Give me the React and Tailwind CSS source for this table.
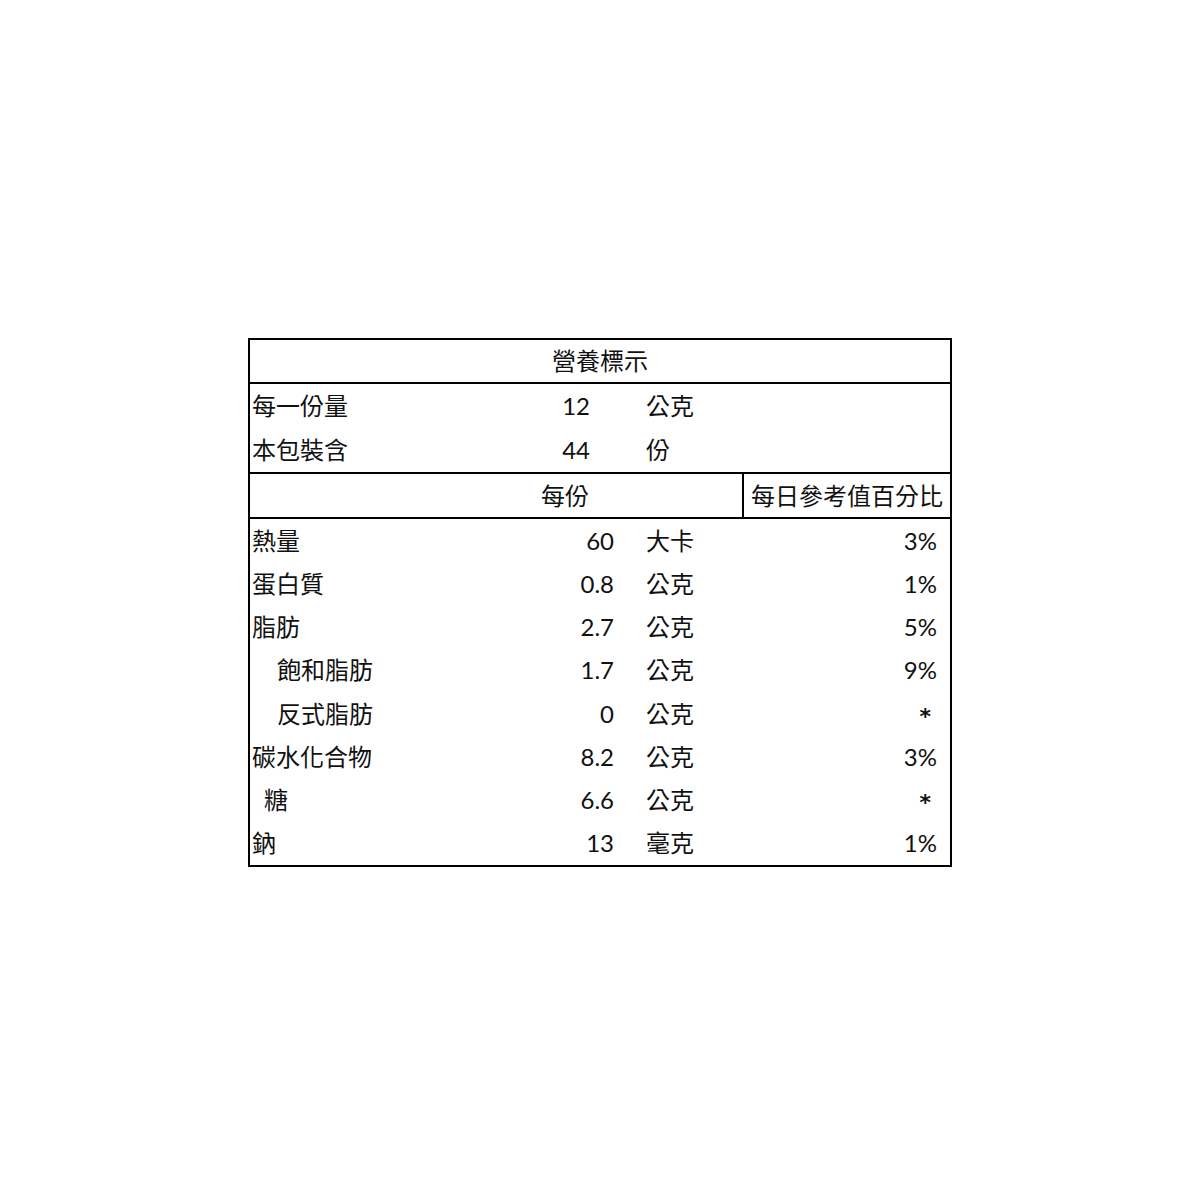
const serving = [
  { label: "每一份量", value: "12", unit: "公克" },
  { label: "本包裝含", value: "44", unit: "份" },
];

const rows = [
  { label: "熱量", indent: "", value: "60", unit: "大卡", pct: "3%" },
  { label: "蛋白質", indent: "", value: "0.8", unit: "公克", pct: "1%" },
  { label: "脂肪", indent: "", value: "2.7", unit: "公克", pct: "5%" },
  { label: "飽和脂肪", indent: "pl-[27px]", value: "1.7", unit: "公克", pct: "9%" },
  { label: "反式脂肪", indent: "pl-[27px]", value: "0", unit: "公克", pct: "*" },
  { label: "碳水化合物", indent: "", value: "8.2", unit: "公克", pct: "3%" },
  { label: "糖", indent: "pl-[14px]", value: "6.6", unit: "公克", pct: "*" },
  { label: "鈉", indent: "", value: "13", unit: "毫克", pct: "1%" },
];

export default function App() {
  return (
    <div className="min-h-[1200px] bg-white pt-[338px] text-[24px] text-[#111] font-['Lato','Noto_Sans_CJK_TC',sans-serif]">
      <div className="mx-auto w-[704px] border-2 border-black">
        <div className="flex h-[44px] items-center justify-center border-b-2 border-black">
          營養標示
        </div>

        <div className="border-b-2 border-black">
          {serving.map((s) => (
            <div key={s.label} className="flex h-[44px] items-center">
              <div className="w-[290px] pl-[2px]">{s.label}</div>
              <div className="w-[50px] text-right">{s.value}</div>
              <div className="pl-[56px]">{s.unit}</div>
            </div>
          ))}
        </div>

        <div className="flex h-[45px] border-b-2 border-black">
          <div className="flex w-[494px] items-center border-r-2 border-black pl-[291px]">
            每份
          </div>
          <div className="flex flex-1 items-center pl-[7px]">每日參考值百分比</div>
        </div>

        {rows.map((r) => (
          <div key={r.label} className="flex h-[43.25px] items-center">
            <div className={`w-[290px] pl-[2px] ${r.indent}`}>{r.label}</div>
            <div className="w-[74px] text-right">{r.value}</div>
            <div className="w-[100px] pl-[32px]">{r.unit}</div>
            {r.pct === "*" ? (
              <div className="flex-1 pr-[19px] text-right">
                <span className="relative top-[1px] text-[22px] font-bold font-['DejaVu_Sans',sans-serif]">*</span>
              </div>
            ) : (
              <div className="flex-1 pr-[13px] text-right">{r.pct}</div>
            )}
          </div>
        ))}
      </div>
    </div>
  );
}
